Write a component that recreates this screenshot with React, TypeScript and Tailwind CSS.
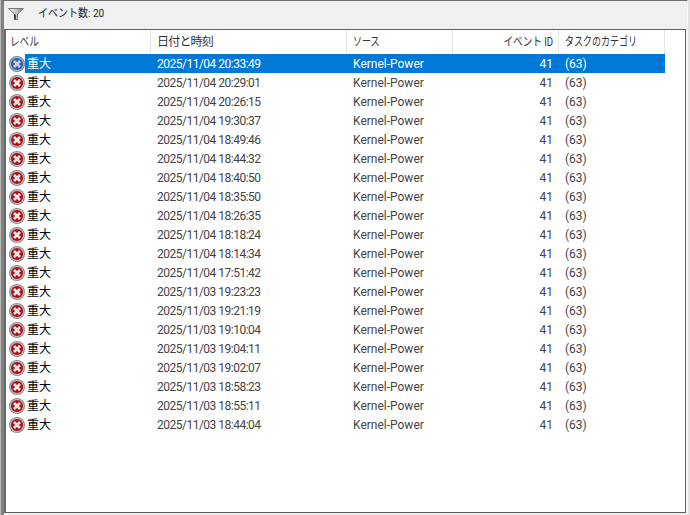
import React from "react";

const rows = [
  "2025/11/04 20:33:49",
  "2025/11/04 20:29:01",
  "2025/11/04 20:26:15",
  "2025/11/04 19:30:37",
  "2025/11/04 18:49:46",
  "2025/11/04 18:44:32",
  "2025/11/04 18:40:50",
  "2025/11/04 18:35:50",
  "2025/11/04 18:26:35",
  "2025/11/04 18:18:24",
  "2025/11/04 18:14:34",
  "2025/11/04 17:51:42",
  "2025/11/03 19:23:23",
  "2025/11/03 19:21:19",
  "2025/11/03 19:10:04",
  "2025/11/03 19:04:11",
  "2025/11/03 19:02:07",
  "2025/11/03 18:58:23",
  "2025/11/03 18:55:11",
  "2025/11/03 18:44:04",
];

const font = "font-['Roboto','Noto_Sans_CJK_JP',sans-serif]";

const ErrorIcon: React.FC<{ selected: boolean }> = ({ selected }) => (
  <svg width="16" height="16" viewBox="0 0 16 16" className="shrink-0">
    <circle cx="8" cy="8" r="8" fill={selected ? "#7489b0" : "#8f8f8f"} />
    <circle cx="8" cy="8" r="6.9" fill={selected ? "#a6b6d2" : "#c4bcbc"} />
    <circle cx="8" cy="8" r="6" fill={selected ? "#3a5fa6" : "#ad121a"} />
    <path d="M5 5 L11 11 M11 5 L5 11" stroke={selected ? "#c3cfe4" : "#f6e6e6"} strokeWidth="2.6" />
  </svg>
);

const App: React.FC = () => {
  return (
    <div className={`h-[515px] w-[690px] overflow-hidden border-l border-r-2 border-l-[#b8b8b8] border-r-[#e2e2e2] bg-[#f0f0f0] text-[12px] ${font}`}>
      <div className="flex h-full flex-col border-t border-r border-l-[3px] border-t-[#6e6e6e] border-r-[#fafafa] border-l-[#808080]">
        {/* ツールバー */}
        <div className="flex h-[28px] items-center pb-[3px] pl-[4px] text-[#222]">
          <svg width="16" height="12" viewBox="0 0 16 12" fill="none">
            <defs>
              <linearGradient id="funnel" x1="0" y1="0" x2="1" y2="0">
                <stop offset="0" stopColor="#f4f4f4" />
                <stop offset="0.55" stopColor="#c4c4c4" />
                <stop offset="1" stopColor="#6a6a6a" />
              </linearGradient>
            </defs>
            <path d="M0.5 0.5 H15.5 L9.5 6 V11.5 H6.5 V6 Z" fill="url(#funnel)" stroke="#7a7a7a" />
            <path d="M7 6.5 V11.5" stroke="#222" strokeWidth="1.5" />
          </svg>
          <span className="ml-[14px] inline-block origin-left scale-x-[0.87] text-[11.5px]">イベント数: 20</span>
        </div>

        {/* 一覧 */}
        <div className="mr-[1px] mb-[2px] flex-1 border border-l-2 border-[#5f5f5f] border-l-[#6a6a6a] bg-white">
          <div className="flex h-[24px] text-[#333]">
            <div className="flex w-[145px] items-center border-r border-[#e5e5e5] pl-[4px]">
              <span className="inline-block origin-left scale-x-[0.8]">レベル</span>
            </div>
            <div className="flex w-[196px] items-center border-r border-[#e5e5e5] pl-[6px]">
              <span className="tracking-[-0.8px]">日付と時刻</span>
            </div>
            <div className="flex w-[106px] items-center border-r border-[#e5e5e5] pl-[6px]">
              <span className="inline-block origin-left scale-x-[0.75]">ソース</span>
            </div>
            <div className="flex w-[106px] items-center justify-end border-r border-[#e5e5e5] pr-[5px]">
              <span className="inline-block origin-right scale-x-[0.8]">イベント ID</span>
            </div>
            <div className="flex w-[106px] items-center border-r border-[#e5e5e5] pl-[6px]">
              <span className="inline-block origin-left scale-x-[0.75]">タスクのカテゴリ</span>
            </div>
          </div>
          {rows.map((date, i) => {
            const selected = i === 0;
            return (
              <div key={date} className={`flex h-[19px] items-center ${selected ? "text-white" : "text-[#444]"}`}>
                <div className="flex w-[19px] justify-end">
                  <ErrorIcon selected={selected} />
                </div>
                <div className={`flex h-full flex-1 items-center ${selected ? "bg-[#0078d7]" : ""}`}>
                  <div className={`w-[126px] pl-[2px] ${selected ? "text-white" : "text-black"}`}>重大</div>
                  <div className="w-[196px] pl-[6px] tracking-[-0.5px]">{date}</div>
                  <div className="w-[106px] pl-[6px]">Kernel-Power</div>
                  <div className="w-[106px] pr-[6px] text-right">41</div>
                  <div className="w-[106px] pl-[6px]">(63)</div>
                </div>
                <div className="w-[20px]" />
              </div>
            );
          })}
        </div>
      </div>
    </div>
  );
};

export default App;
